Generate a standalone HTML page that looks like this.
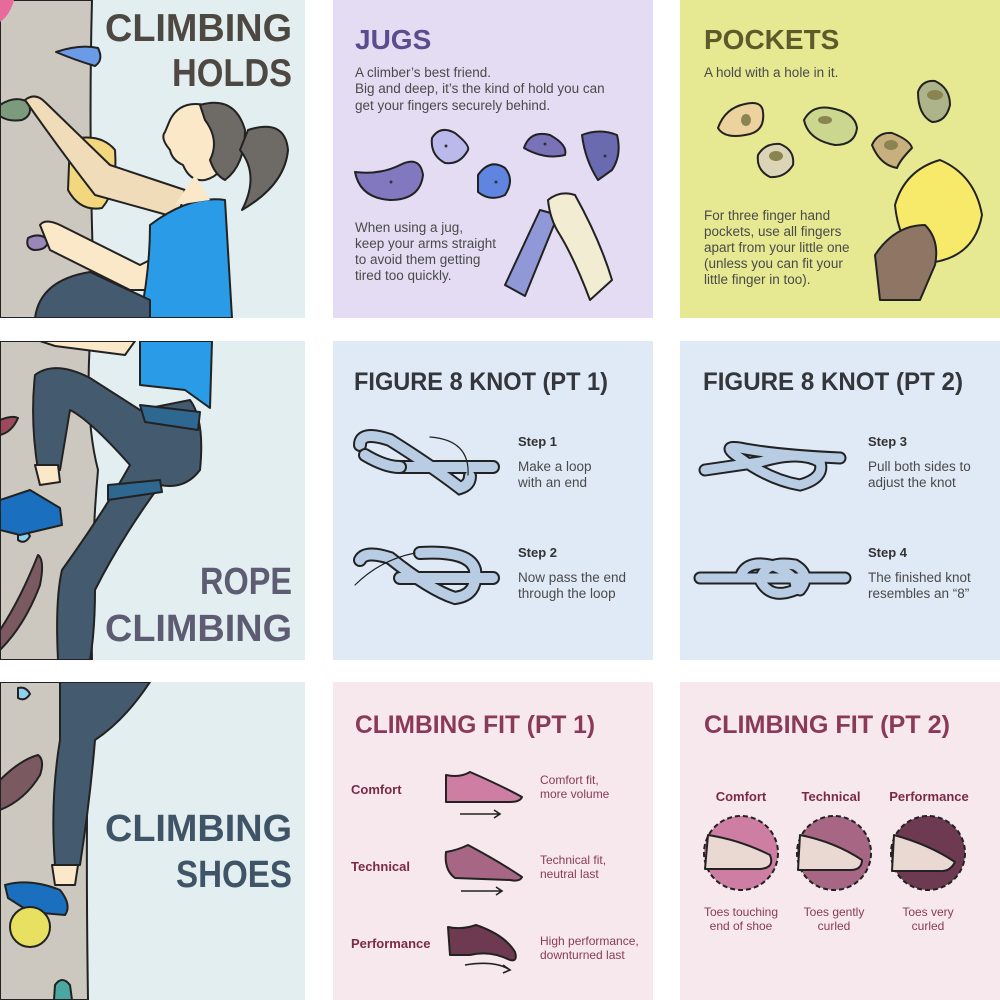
<!DOCTYPE html>
<html><head><meta charset="utf-8"><style>
html,body{margin:0;padding:0;background:#fff;}
svg{display:block}
text{font-family:"Liberation Sans",sans-serif;}
.t{font-weight:bold}
.b{font-size:13.5px;fill:#4a4a4a}
.s{stroke:#222;stroke-width:2;stroke-linejoin:round}
</style></head><body>
<svg width="1000" height="1000" viewBox="0 0 1000 1000" xmlns="http://www.w3.org/2000/svg">
<defs>
<clipPath id="c1"><rect x="0" y="0" width="305" height="318"/></clipPath>
<clipPath id="c2"><rect x="0" y="341" width="305" height="319"/></clipPath>
<clipPath id="c3"><rect x="0" y="682" width="305" height="318"/></clipPath>
</defs>
<rect width="1000" height="1000" fill="#fff"/>
<!-- column 1 -->
<g clip-path="url(#c1)">
<rect x="0" y="0" width="305" height="318" fill="#e2eef0"/>
<path d="M0 0H92Q88 150 95 318H0Z" fill="#cdc8bf" class="s"/>
<path d="M0 0H14Q10 15 0 22Z" fill="#e66a9a"/>
<path d="M56 52Q80 44 98 48Q104 60 95 66Q75 60 56 52Z" fill="#6b9be6" class="s"/>
<path d="M0 105Q15 95 28 102Q34 115 22 120Q8 122 0 116Z" fill="#7c9a7c" class="s"/>
<path d="M70 140Q100 132 115 150Q118 190 102 208Q80 212 68 190Z" fill="#f2d77f" class="s"/>
<path d="M28 238Q40 232 48 240Q48 250 34 250Q25 248 28 238Z" fill="#9a86b8" class="s"/>
<path d="M25 100Q35 92 45 102L110 165L185 190L178 218L95 195Q60 150 25 100Z" fill="#f0dcb8" class="s"/>
<path d="M40 225Q45 218 60 225L140 265L180 245L185 290L130 290L50 250Z" fill="#fbe8c8" class="s"/>
<path d="M150 225Q190 195 225 200L232 318H140Q150 270 150 225Z" fill="#2a9be6" class="s"/>
<path d="M35 318Q40 280 90 272L150 300L150 318Z" fill="#445a6e" class="s"/>
<path d="M170 120Q180 100 205 105Q225 110 228 150Q225 175 205 180Q190 182 183 165Q172 160 170 150Q160 138 165 132Z" fill="#fbe8c8" class="s"/>
<path d="M200 105Q235 95 245 130Q245 165 225 180Q215 175 210 160Q220 140 205 120Z" fill="#6e6a66" class="s"/>
<path d="M248 130Q285 118 288 150Q285 185 242 210Q260 175 240 150Z" fill="#6e6a66" class="s"/>
<path d="M195 175L210 200L175 205Z" fill="#fbe8c8"/>
<text class="t" x="105" y="41" font-size="39" fill="#4e4843" textLength="187" lengthAdjust="spacingAndGlyphs">CLIMBING</text>
<text class="t" x="172" y="86" font-size="39" fill="#4e4843" textLength="120" lengthAdjust="spacingAndGlyphs">HOLDS</text>
</g>
<g clip-path="url(#c2)">
<rect x="0" y="341" width="305" height="319" fill="#e2eef0"/>
<path d="M0 341H90Q85 420 98 470Q90 560 92 660H0Z" fill="#cdc8bf" class="s"/>
<path d="M0 420Q12 415 18 418Q12 432 0 435Z" fill="#9a4a5a" class="s"/>
<path d="M18 530Q26 528 30 536Q25 545 18 540Z" fill="#8fd0f0" class="s"/>
<path d="M0 630Q20 600 38 555Q45 560 40 585Q25 625 0 650Z" fill="#7a5a60" class="s"/>
<path d="M30 341H40L55 346L125 355L135 341Z" fill="#fbe8c8" class="s"/>
<path d="M140 341H212L210 408L185 390L140 385Z" fill="#2a9be6" class="s"/>
<path d="M35 375Q55 360 90 378L140 410L190 400Q205 420 200 470Q185 490 160 485Q120 540 95 590Q95 630 90 660H58Q55 600 62 570Q105 510 130 465Q90 420 70 410L60 470H38Q30 420 35 375Z" fill="#445a6e" class="s"/>
<path d="M140 405L200 412L198 430L145 422Z" fill="#2e6890" class="s"/>
<path d="M108 485L160 480L162 492L108 500Z" fill="#2e6890" class="s"/>
<path d="M0 500L30 490L60 508L62 525L20 535L0 530Z" fill="#1a6fbf" class="s"/>
<path d="M35 465H58L60 482L40 485Z" fill="#fbe8c8" class="s"/>
<text class="t" x="200" y="594" font-size="38" fill="#5d5c72" textLength="92" lengthAdjust="spacingAndGlyphs">ROPE</text>
<text class="t" x="105" y="641" font-size="38" fill="#5d5c72" textLength="187" lengthAdjust="spacingAndGlyphs">CLIMBING</text>
</g>
<g clip-path="url(#c3)">
<rect x="0" y="682" width="305" height="318" fill="#e2eef0"/>
<path d="M0 682H90Q85 800 88 1000H0Z" fill="#cdc8bf" class="s"/>
<path d="M0 780Q20 760 38 755Q45 760 40 775Q25 800 0 810Z" fill="#7a5a60" class="s"/>
<path d="M18 688Q26 686 30 694Q25 702 18 698Z" fill="#8fd0f0" class="s"/>
<path d="M60 682H150Q125 720 95 740Q90 800 80 865H55Q50 800 60 740Z" fill="#445a6e" class="s"/>
<path d="M52 865H78L75 885L55 885Z" fill="#fbe8c8" class="s"/>
<path d="M5 885Q30 878 60 890Q72 905 65 915L30 912L8 898Z" fill="#1a6fbf" class="s"/>
<circle cx="30" cy="927" r="20" fill="#e8e060" class="s"/>
<path d="M55 985Q62 975 70 985L72 1000H54Z" fill="#4aa8a0" class="s"/>
<text class="t" x="105" y="841" font-size="38" fill="#3f5567" textLength="187" lengthAdjust="spacingAndGlyphs">CLIMBING</text>
<text class="t" x="176" y="887" font-size="38" fill="#3f5567" textLength="116" lengthAdjust="spacingAndGlyphs">SHOES</text>
</g>
<!-- JUGS -->
<rect x="333" y="0" width="320" height="318" fill="#e3dcf2"/>
<text class="t" x="355" y="49" font-size="28" fill="#5a4d8e">JUGS</text>
<text class="b" x="355" y="77">A climber’s best friend.</text>
<text class="b" x="355" y="93">Big and deep, it’s the kind of hold you can</text>
<text class="b" x="355" y="110">get your fingers securely behind.</text>
<path d="M355 172Q380 175 400 165Q420 155 423 175Q420 200 390 200Q360 198 355 172Z" fill="#8278c0" class="s"/>
<path d="M432 138Q440 125 455 133Q470 145 468 150Q460 165 445 163Q430 155 432 138Z" fill="#bbb8ec" class="s"/>
<path d="M478 175Q490 158 505 168Q515 180 505 195Q490 202 478 192Z" fill="#5f85e0" class="s"/>
<path d="M524 148Q530 130 550 135Q568 145 565 155Q545 160 524 148Z" fill="#7a72b8" class="s"/>
<path d="M582 135Q600 128 617 135Q622 155 612 170L598 180Q585 160 582 135Z" fill="#6a6ab0" class="s"/>
<g fill="#333"><circle cx="391" cy="182" r="1.5"/><circle cx="446" cy="146" r="1.5"/><circle cx="496" cy="182" r="1.5"/><circle cx="545" cy="144" r="1.5"/><circle cx="605" cy="156" r="1.5"/></g>
<path d="M505 285L540 210L558 215L525 296Z" fill="#9098d8" class="s"/>
<path d="M548 200Q560 190 575 195Q600 240 612 280L590 300Q575 260 560 235Q550 220 548 200Z" fill="#f2ecd2" class="s"/>
<text class="b" x="355" y="232">When using a jug,</text>
<text class="b" x="355" y="248">keep your arms straight</text>
<text class="b" x="355" y="264">to avoid them getting</text>
<text class="b" x="355" y="280">tired too quickly.</text>
<!-- POCKETS -->
<rect x="680" y="0" width="320" height="318" fill="#e6e892"/>
<text class="t" x="704" y="49" font-size="28" fill="#5e5a2a">POCKETS</text>
<text class="b" x="704" y="77">A hold with a hole in it.</text>
<path d="M718 128Q725 108 745 104Q762 100 763 112Q765 130 750 134Q725 140 718 128Z" fill="#ecd29c" class="s"/>
<path d="M758 155Q765 143 780 144Q795 150 793 165Q785 178 770 177Q756 170 758 155Z" fill="#dcd4b6" class="s"/>
<path d="M804 120Q812 105 830 108Q855 112 857 128Q855 145 835 145Q808 140 804 120Z" fill="#cbd68e" class="s"/>
<path d="M872 145Q878 132 892 133Q910 140 912 148Q900 160 897 168Q880 165 872 145Z" fill="#c8b07e" class="s"/>
<path d="M918 92Q922 80 935 81Q950 88 950 105Q946 122 932 122Q918 115 918 92Z" fill="#aeb48a" class="s"/>
<g fill="#8a8450"><ellipse cx="746" cy="120" rx="5" ry="6"/><ellipse cx="776" cy="156" rx="7" ry="5"/><ellipse cx="825" cy="120" rx="7" ry="4"/><ellipse cx="891" cy="145" rx="7" ry="5"/><ellipse cx="935" cy="95" rx="8" ry="5"/></g>
<path d="M895 205Q905 170 940 160Q975 175 982 215Q975 255 935 262Q900 255 895 205Z" fill="#f7e96a" class="s"/>
<path d="M875 255Q895 225 925 225Q940 240 935 265L920 300H880Z" fill="#8e7564" class="s"/>
<text class="b" x="704" y="220">For three finger hand</text>
<text class="b" x="704" y="236">pockets, use all fingers</text>
<text class="b" x="704" y="252">apart from your little one</text>
<text class="b" x="704" y="268">(unless you can fit your</text>
<text class="b" x="704" y="284">little finger in too).</text>
<!-- KNOT 1 -->
<rect x="333" y="341" width="320" height="319" fill="#dfeaf6"/>
<text class="t" x="354" y="390" font-size="25" fill="#33363a" textLength="254" lengthAdjust="spacingAndGlyphs">FIGURE 8 KNOT (PT 1)</text>
<g fill="none" stroke-linecap="round">
<path d="M400 467L493 467M360 445Q360 430 390 440Q430 465 460 488Q470 485 470 476" stroke="#222" stroke-width="14"/>
<path d="M400 467L493 467M360 445Q360 430 390 440Q430 465 460 488Q470 485 470 476" stroke="#b8cce4" stroke-width="10"/>
<path d="M365 455Q385 467 400 467" stroke="#222" stroke-width="14"/>
<path d="M365 455Q385 467 400 467" stroke="#b8cce4" stroke-width="10"/>
<path d="M468 475Q470 440 430 437" stroke="#222" stroke-width="1.2"/>
<path d="M400 578L493 578M360 560Q365 550 390 558Q430 590 455 598Q478 595 475 570Q470 550 420 553" stroke="#222" stroke-width="14"/>
<path d="M400 578L493 578M360 560Q365 550 390 558Q430 590 455 598Q478 595 475 570Q470 550 420 553" stroke="#b8cce4" stroke-width="10"/>
<path d="M415 553Q380 560 355 585" stroke="#222" stroke-width="1.2"/>
</g>
<text class="t" x="518" y="446" font-size="13" fill="#333">Step 1</text>
<text class="b" x="518" y="471">Make a loop</text>
<text class="b" x="518" y="487">with an end</text>
<text class="t" x="518" y="557" font-size="13" fill="#333">Step 2</text>
<text class="b" x="518" y="582">Now pass the end</text>
<text class="b" x="518" y="598">through the loop</text>
<!-- KNOT 2 -->
<rect x="680" y="341" width="320" height="319" fill="#dfeaf6"/>
<text class="t" x="703" y="390" font-size="25" fill="#33363a" textLength="260" lengthAdjust="spacingAndGlyphs">FIGURE 8 KNOT (PT 2)</text>
<g fill="none" stroke-linecap="round">
<path d="M705 470L760 462Q800 450 820 462Q825 478 800 485Q770 480 740 458Q720 445 740 448Q775 455 840 458" stroke="#222" stroke-width="13"/>
<path d="M705 470L760 462Q800 450 820 462Q825 478 800 485Q770 480 740 458Q720 445 740 448Q775 455 840 458" stroke="#b8cce4" stroke-width="9"/>
<path d="M700 578H845M740 578Q745 560 770 565Q800 575 795 590Q770 600 760 580Q765 560 795 565Q812 575 800 590" stroke="#222" stroke-width="13"/>
<path d="M700 578H845M740 578Q745 560 770 565Q800 575 795 590Q770 600 760 580Q765 560 795 565Q812 575 800 590" stroke="#b8cce4" stroke-width="9"/>
</g>
<text class="t" x="868" y="446" font-size="13" fill="#333">Step 3</text>
<text class="b" x="868" y="471">Pull both sides to</text>
<text class="b" x="868" y="487">adjust the knot</text>
<text class="t" x="868" y="557" font-size="13" fill="#333">Step 4</text>
<text class="b" x="868" y="582">The finished knot</text>
<text class="b" x="868" y="598">resembles an “8”</text>
<!-- FIT 1 -->
<rect x="333" y="682" width="320" height="318" fill="#f6e8ec"/>
<text class="t" x="355" y="733" font-size="25" fill="#8a3a58" textLength="240" lengthAdjust="spacingAndGlyphs">CLIMBING FIT (PT 1)</text>
<g font-size="13" font-weight="bold" fill="#7a2a48">
<text x="351" y="794">Comfort</text><text x="351" y="871">Technical</text><text x="351" y="948">Performance</text></g>
<g font-size="12" fill="#8a3a58">
<text x="540" y="784">Comfort fit,</text><text x="540" y="798">more volume</text>
<text x="540" y="864">Technical fit,</text><text x="540" y="878">neutral last</text>
<text x="540" y="945">High performance,</text><text x="540" y="959">downturned last</text></g>
<path d="M446 775Q460 778 470 772Q500 785 522 797Q520 802 510 802H446Z" fill="#cd7ea2" class="s"/>
<path d="M446 852Q458 850 468 845Q500 862 522 877Q520 882 510 880L455 878Q444 870 446 852Z" fill="#a86685" class="s"/>
<path d="M448 927Q462 930 476 925Q505 935 515 952Q518 962 510 960Q490 950 470 955H450Z" fill="#6e3a52" class="s"/>
<g stroke="#222" stroke-width="1.6" fill="none"><path d="M460 814H500M494 810L500 814L494 818"/><path d="M461 891H502M496 887L502 891L496 895"/><path d="M465 965Q495 960 510 970M503 965L510 970L503 973"/></g>
<!-- FIT 2 -->
<rect x="680" y="682" width="320" height="318" fill="#f6e8ec"/>
<text class="t" x="704" y="733" font-size="25" fill="#8a3a58" textLength="246" lengthAdjust="spacingAndGlyphs">CLIMBING FIT (PT 2)</text>
<g font-size="13" font-weight="bold" fill="#7a2a48" text-anchor="middle">
<text x="741" y="801">Comfort</text><text x="831" y="801">Technical</text><text x="929" y="801">Performance</text></g>
<g stroke="#222" stroke-width="2" stroke-dasharray="5 3">
<circle cx="741" cy="853" r="37" fill="#cd7ea2"/>
<circle cx="834" cy="853" r="37" fill="#a86685"/>
<circle cx="928" cy="853" r="37" fill="#6e3a52"/></g>
<g class="s" fill="#ead8d2">
<path d="M708 835Q740 840 770 855Q775 868 760 869H705Z"/>
<path d="M800 835Q835 842 862 860Q862 870 850 870H798Z"/>
<path d="M894 835Q930 845 955 862Q950 872 940 871H892Z"/></g>
<g font-size="12" fill="#8a3a58" text-anchor="middle">
<text x="741" y="916">Toes touching</text><text x="741" y="930">end of shoe</text>
<text x="834" y="916">Toes gently</text><text x="834" y="930">curled</text>
<text x="928" y="916">Toes very</text><text x="928" y="930">curled</text></g>
</svg>
</body></html>
